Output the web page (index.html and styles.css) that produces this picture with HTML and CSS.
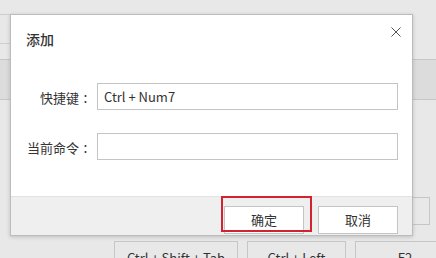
FILE: index.html
```html
<!DOCTYPE html>
<html lang="zh">
<head>
<meta charset="utf-8">
<title>添加</title>
<link rel="stylesheet" href="styles.css">
</head>
<body>
<div class="page">
  <div class="left-row"></div>
  <div class="band"></div>
  <div class="mid-row"><div class="ghost-btn"></div></div>
  <div class="key-row">
    <div class="key key-a">Ctrl + Shift + Tab</div>
    <div class="key key-b">Ctrl + Left</div>
    <div class="key key-c">F2</div>
  </div>

  <div class="dialog">
    <div class="dlg-head">
      <div class="dlg-title">添加</div>
      <button class="dlg-close" aria-label="关闭">
        <svg width="10" height="10" viewBox="0 0 10 10"><path d="M0.5 0.5L9.5 9.5M9.5 0.5L0.5 9.5" stroke="#555" stroke-width="1" fill="none"/></svg>
      </button>
    </div>
    <div class="dlg-body">
      <div class="field">
        <label class="field-label">快捷键<span class="colon">:</span></label>
        <div class="field-input">Ctrl + Num7</div>
      </div>
      <div class="field">
        <label class="field-label">当前命令<span class="colon">:</span></label>
        <div class="field-input"></div>
      </div>
    </div>
    <div class="dlg-foot">
      <button class="btn">确定</button>
      <button class="btn">取消</button>
    </div>
  </div>
  <div class="highlight"></div>
</div>
</body>
</html>
```

FILE: styles.css
```css
* { box-sizing: border-box; }
html, body {
  margin: 0;
  padding: 0;
}
body {
  width: 436px;
  height: 258px;
  overflow: hidden;
  background: #e8e8e8;
  font-family: "Noto Sans CJK SC", "Noto Sans", sans-serif;
  font-size: 13px;
  color: #333;
}
.page {
  position: relative;
  width: 436px;
  height: 258px;
  padding-top: 14px;
}
.left-row {
  width: 12px;
  height: 30px;
  border-top: 1px solid #cfcfcf;
  border-bottom: 1px solid #cfcfcf;
}
.band {
  margin-top: 15px;
  height: 41px;
  background: #dcdcdc;
  border-top: 1px solid #c6c6c6;
  border-bottom: 1px solid #c6c6c6;
}
.mid-row {
  margin-top: 97px;
  display: flex;
  justify-content: flex-end;
  padding-right: 6px;
}
.ghost-btn {
  width: 80px;
  height: 28px;
  border: 1px solid #c6c6c6;
  background: #e8e8e8;
}
.key-row {
  margin-top: 16px;
  display: flex;
  gap: 9px;
  padding-left: 114px;
}
.key {
  flex: none;
  height: 30px;
  border: 1px solid #c6c6c6;
  border-bottom: 0;
  background: #e8e8e8;
  text-align: center;
  line-height: 26px;
  padding-top: 3px;
  color: #333;
}
.key-a { width: 124px; }
.key-b { width: 99px; }
.key-c { width: 100px; }

.dialog {
  position: absolute;
  left: 10px;
  top: 14px;
  width: 403px;
  height: 222px;
  background: #fff;
  border: 1px solid #bcbcbc;
  box-shadow: 0 1px 4px rgba(0,0,0,0.18);
  display: flex;
  flex-direction: column;
}
.dlg-head {
  height: 48px;
  display: flex;
  justify-content: space-between;
  align-items: flex-start;
}
.dlg-title {
  padding-left: 15px;
  line-height: 48px;
  font-size: 14px;
  font-weight: 500;
  color: #333;
}
.dlg-close {
  margin: 12px 11px 0 0;
  padding: 0;
  width: 10px;
  height: 10px;
  border: 0;
  background: none;
  display: block;
}
.dlg-close svg { display: block; }
.dlg-body {
  padding: 18px 14px 35px 0;
  display: flex;
  flex-direction: column;
  gap: 20px;
}
.field {
  display: flex;
  align-items: center;
}
.field-label {
  width: 81px;
  margin-right: 5px;
  text-align: right;
  color: #333;
  line-height: 27px;
  padding-top: 3px;
  white-space: nowrap;
}
.colon {
  display: inline-block;
  width: 13px;
  text-align: center;
  font-size: 14px;
}
.field-input {
  width: 301px;
  height: 27px;
  border: 1px solid #c4c4c4;
  padding-left: 6px;
  line-height: 25px;
  color: #333;
  font-size: 13px;
}
.dlg-foot {
  flex: 1;
  border-top: 1px solid #e2e2e2;
  background: #efefef;
  display: flex;
  justify-content: flex-end;
  gap: 14px;
  padding: 9px 14px 0 0;
}
.btn {
  width: 80px;
  height: 28px;
  border: 1px solid #c4c4c4;
  background: #fff;
  font-family: inherit;
  font-size: 13px;
  color: #333;
  padding: 0;
  line-height: 26px;
}
.highlight {
  position: absolute;
  left: 221px;
  top: 196px;
  width: 91px;
  height: 36px;
  border: 2px solid #d3232f;
}
```
